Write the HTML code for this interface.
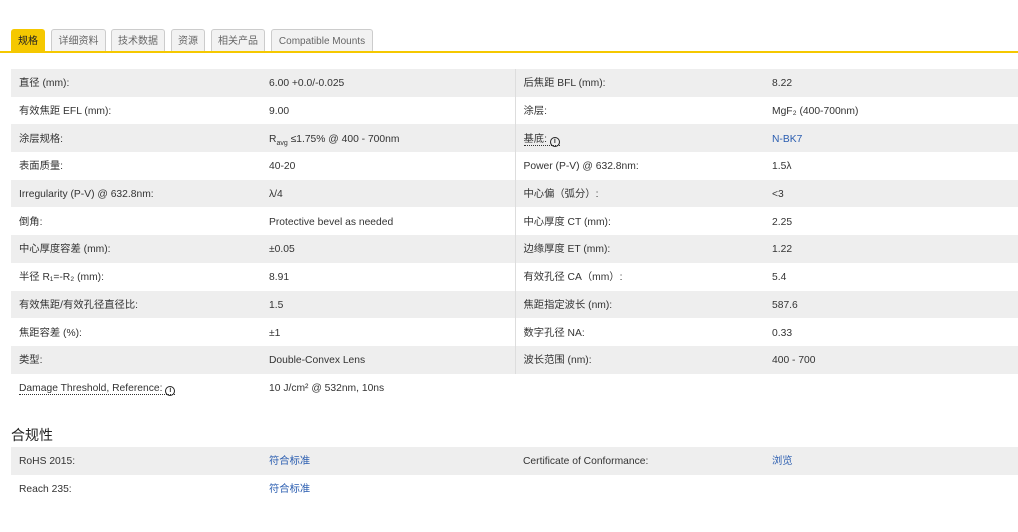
<!DOCTYPE html>
<html><head><meta charset="utf-8"><style>
body{margin:0;background:#fff;font-family:"Liberation Sans","Noto Sans CJK SC",sans-serif;color:#333;width:1018px;height:532px;overflow:hidden;position:relative}
.tab{position:absolute;top:29px;height:23px;border:1px solid #ccc;border-bottom:none;background:#f2f2f2;border-radius:3px 3px 0 0;font-size:10px;color:#666;line-height:24px;text-align:center;box-sizing:border-box}
.tab.a{background:#f5c800;border-color:#f5c800;color:#222}
.line{position:absolute;top:51px;left:0;width:1018px;height:2px;background:#f5c800}
table{position:absolute;left:11px;border-collapse:collapse;width:1007px;font-size:10.3px;table-layout:fixed}
td{height:27.7px;padding:3px 0 0 8px;box-sizing:border-box;white-space:nowrap;line-height:14px;vertical-align:middle;overflow:hidden}
tr:nth-child(odd) td{background:#eee}
td.c1{width:250px}td.c2{width:254px;border-right:1px solid #ddd}td.c3{width:249px}
.l{color:#2a5db0}
.u{border-bottom:1px dotted #333}
.i{display:inline-block;width:10px;height:10px;border:1.4px solid #222;border-radius:50%;font-size:7px;line-height:8px;text-align:center;font-weight:bold;vertical-align:-1px;box-sizing:border-box}
.s{font-size:7px;position:relative;top:3px;line-height:0}
h3{position:absolute;left:11px;top:425px;margin:0;font-size:14px;font-weight:normal;color:#222}
</style></head><body>
<div class="tab a" style="left:11px;width:34px">规格</div>
<div class="tab" style="left:51px;width:55px">详细资料</div>
<div class="tab" style="left:111px;width:54px">技术数据</div>
<div class="tab" style="left:171px;width:34px">资源</div>
<div class="tab" style="left:211px;width:54px">相关产品</div>
<div class="tab" style="left:271px;width:102px">Compatible Mounts</div>
<div class="line"></div>
<table style="top:69px">
<tr><td class="c1">直径 (mm):</td><td class="c2">6.00 +0.0/-0.025</td><td class="c3">后焦距 BFL (mm):</td><td>8.22</td></tr>
<tr><td class="c1">有效焦距 EFL (mm):</td><td class="c2">9.00</td><td class="c3">涂层:</td><td>MgF₂ (400-700nm)</td></tr>
<tr><td class="c1">涂层规格:</td><td class="c2">R<span class="s">avg</span> ≤1.75% @ 400 - 700nm</td><td class="c3"><span class="u">基底: <span class="i">i</span></span></td><td class="l">N-BK7</td></tr>
<tr><td class="c1">表面质量:</td><td class="c2">40-20</td><td class="c3">Power (P-V) @ 632.8nm:</td><td>1.5λ</td></tr>
<tr><td class="c1">Irregularity (P-V) @ 632.8nm:</td><td class="c2">λ/4</td><td class="c3">中心偏（弧分）:</td><td>&lt;3</td></tr>
<tr><td class="c1">倒角:</td><td class="c2">Protective bevel as needed</td><td class="c3">中心厚度 CT (mm):</td><td>2.25</td></tr>
<tr><td class="c1">中心厚度容差 (mm):</td><td class="c2">±0.05</td><td class="c3">边缘厚度 ET (mm):</td><td>1.22</td></tr>
<tr><td class="c1">半径 R₁=-R₂ (mm):</td><td class="c2">8.91</td><td class="c3">有效孔径 CA（mm）:</td><td>5.4</td></tr>
<tr><td class="c1">有效焦距/有效孔径直径比:</td><td class="c2">1.5</td><td class="c3">焦距指定波长 (nm):</td><td>587.6</td></tr>
<tr><td class="c1">焦距容差 (%):</td><td class="c2">±1</td><td class="c3">数字孔径 NA:</td><td>0.33</td></tr>
<tr><td class="c1">类型:</td><td class="c2">Double-Convex Lens</td><td class="c3">波长范围 (nm):</td><td>400 - 700</td></tr>
<tr><td class="c1" style="background:#fff"><span class="u">Damage Threshold, Reference: <span class="i">i</span></span></td><td class="c2" style="background:#fff;border-right:none">10 J/cm² @ 532nm, 10ns</td><td class="c3" style="background:#fff"></td><td style="background:#fff"></td></tr>
</table>
<h3>合规性</h3>
<table style="top:447px">
<tr><td class="c1">RoHS 2015:</td><td class="c2 l" style="border-right:none">符合标准</td><td class="c3">Certificate of Conformance:</td><td class="l">浏览</td></tr>
<tr><td class="c1">Reach 235:</td><td class="c2 l" style="border-right:none">符合标准</td><td class="c3"></td><td></td></tr>
</table>
</body></html>
